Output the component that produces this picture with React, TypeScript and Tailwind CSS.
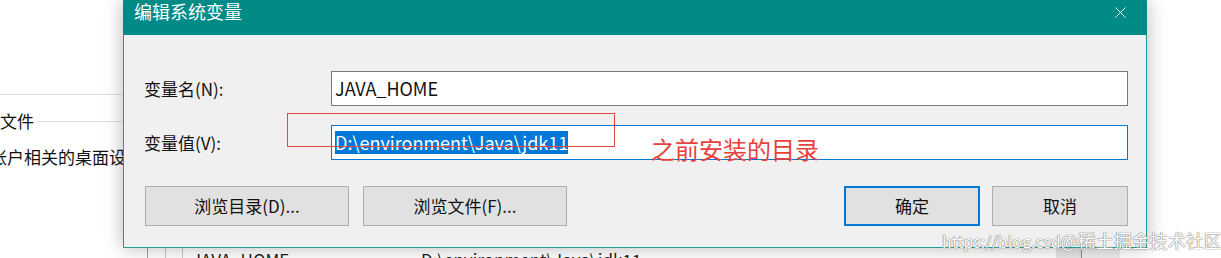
import { X } from "lucide-react";

const font = { fontFamily: '"Noto Sans CJK SC", "Noto Sans", sans-serif' };

function WinButton({ label, primary, className }: { label: string; primary?: boolean; className?: string }) {
  return (
    <button
      className={
        "h-[40px] bg-[#e1e1e1] text-[17px] text-[#111] flex items-center justify-center " +
        (primary ? "border-2 border-[#0078d7] " : "border border-[#adadad] ") +
        (className ?? "")
      }
    >
      {label}
    </button>
  );
}

export default function App() {
  return (
    <div className="relative w-[1221px] h-[258px] overflow-hidden bg-white" style={font}>
      {/* window behind the dialog */}
      <div className="flex flex-col w-[123px] pt-[94px] text-[17px] text-[#111]">
        <div className="h-px bg-[#dcdcdc]" />
        <div className="flex items-center mt-[15px] h-[22px]">
          <span className="whitespace-nowrap">文件</span>
          <div className="flex-1 h-px bg-[#dcdcdc] ml-[3px]" />
        </div>
        <div className="mt-[12px] whitespace-nowrap -ml-[10px]">帐户相关的桌面设置</div>
      </div>
      <div className="absolute left-0 top-[247px] w-[1221px] h-[11px] flex text-[17px] text-[#222]">
        <div className="w-[147px]" />
        <div className="w-px bg-[#a0a0a0]" />
        <div className="w-[17px]" />
        <div className="w-px bg-[#c8c8c8]" />
        <div className="w-[16px]" />
        <div className="w-px bg-[#c8c8c8]" />
        <div className="pl-[9px] w-[238px] leading-[26px]">JAVA_HOME</div>
        <div className="leading-[26px]">D:\environment\Java\jdk11</div>
        <div className="flex-1" />
        <div className="w-[25px] bg-[#e6e6e6]" />
        <div className="w-px bg-[#8c8c8c]" />
        <div className="w-[38px] bg-[#eeeeee]" />
        <div className="w-[101px]" />
      </div>

      {/* dialog */}
      <div className="absolute left-[123px] top-0 w-[1024px] h-[248px] bg-[#f0f0f0] border border-[#1f9b98] border-t-0 shadow-[0_0_18px_rgba(0,0,0,0.28)] flex flex-col">
        <div className="h-[35px] bg-[#018b87] flex items-center justify-between pl-[11px] pr-[17px] -mx-px text-white">
          <span className="text-[18px] -mt-[12px]">编辑系统变量</span>
          <X className="w-[19px] h-[19px] -mt-[10px]" strokeWidth={1.2} />
        </div>
        <div className="flex flex-col pl-[20px] pr-[18px] pt-[36px]">
          <div className="flex items-center h-[35px]">
            <span className="w-[187px] text-[17px] text-[#111]">变量名(N):</span>
            <div className="flex-1 h-[35px] bg-white border border-[#7a7a7a] flex items-center pl-[3px] text-[18px] text-[#111]">
              JAVA_HOME
            </div>
          </div>
          <div className="flex items-center h-[35px] mt-[19px]">
            <span className="w-[187px] text-[17px] text-[#111]">变量值(V):</span>
            <div className="flex-1 h-[35px] bg-white border border-[#0078d7] flex items-center pl-[3px] text-[18px]">
              <span className="bg-[#0078d7] text-white leading-[23px]">D:\environment\Java\jdk11</span>
            </div>
          </div>
          <div className="flex mt-[26px] pl-px">
            <WinButton label="浏览目录(D)..." className="w-[204px]" />
            <WinButton label="浏览文件(F)..." className="w-[204px] ml-[14px]" />
            <div className="flex-1" />
            <WinButton label="确定" primary className="w-[136px]" />
            <WinButton label="取消" className="w-[136px] ml-[12px]" />
          </div>
        </div>
      </div>

      {/* annotations */}
      <div className="absolute left-[287px] top-[113px] w-[328px] h-[34px] border border-[#e04848]" />
      <div className="absolute left-[651px] top-[133px] text-[24px] text-[#e8403c] leading-[32px]">之前安装的目录</div>
      <div
        className="absolute left-[942px] top-[228px] text-[18px] text-white leading-[24px] whitespace-nowrap"
        style={{ textShadow: "0 0 1px #666, 0 0 1px #666" }}
      >
        <span className="text-[16px]">https://blog.csd</span>@稀土掘金技术社区
      </div>
    </div>
  );
}
